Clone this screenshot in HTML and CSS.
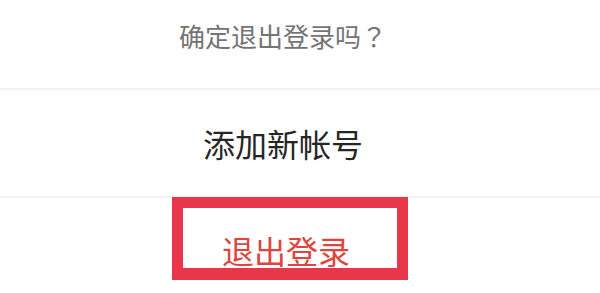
FILE: index.html
```html
<!DOCTYPE html>
<html lang="zh-CN">
<head>
    <meta charset="UTF-8">
    <meta name="viewport" content="width=device-width, initial-scale=1.0">
    <title>退出登录</title>
    <link rel="stylesheet" href="styles.css">
</head>
<body>
    <div class="sheet">
        <div class="row row-title">
            <span class="title">确定退出登录吗<span class="mark">？</span></span>
        </div>
        <div class="row row-action">
            <span class="action">添加新帐号</span>
        </div>
        <div class="row row-action row-last">
            <span class="action action-danger">退出登录</span>
            <div class="highlight"></div>
        </div>
    </div>
</body>
</html>
```

FILE: styles.css
```css
* {
    margin: 0;
    padding: 0;
    box-sizing: border-box;
}

body {
    font-family: "Noto Sans CJK SC", "Noto Sans", sans-serif;
    background: #fff;
    width: 600px;
    height: 293px;
    overflow: hidden;
}

.sheet {
    display: flex;
    flex-direction: column;
}

.row {
    position: relative;
    display: flex;
    align-items: center;
    justify-content: center;
    padding-right: 34px;
    border-bottom: 2px solid #f1f1f1;
}

.row-title {
    height: 90px;
    padding-bottom: 17px;
}

.row-action {
    height: 108px;
}

.row-last {
    border-bottom: none;
}

.title {
    font-size: 26px;
    color: #747474;
    line-height: 1;
    text-spacing-trim: space-all;
}

.mark {
    display: inline-block;
    width: 1em;
    text-align: center;
    font-family: "Noto Sans CJK TC", "Noto Sans CJK SC", sans-serif;
}

.action {
    font-size: 32px;
    color: #262626;
    line-height: 1;
}

.action-danger {
    color: #e0443d;
    margin-left: 6px;
    margin-top: -4px;
}

.highlight {
    position: absolute;
    left: 172px;
    top: -1px;
    width: 236px;
    height: 83px;
    border: 11px solid #e8364a;
    border-bottom-width: 12px;
}
```
